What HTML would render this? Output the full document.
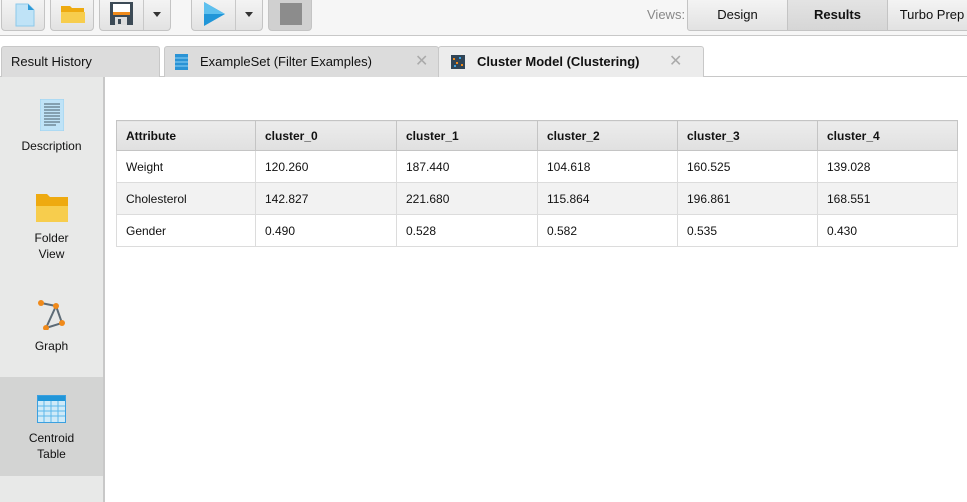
<!DOCTYPE html>
<html><head><style>
*{margin:0;padding:0;box-sizing:border-box}
body{width:967px;height:502px;overflow:hidden;background:#fff;font-family:"Liberation Sans",Arial,sans-serif;font-size:12px;color:#111;position:relative}
.a{position:absolute}
.btn{position:absolute;top:-2px;height:33px;border:1px solid #c4c4c4;border-radius:0 0 4px 4px;background:linear-gradient(#f4f4f4,#e2e2e2)}
.tab{position:absolute;top:46px;height:31px;border:1px solid #c8c8c8;border-bottom:none;border-radius:3px 3px 0 0;background:#dcdcdc;font-size:13px;line-height:30px}
table{position:absolute;left:116px;top:120px;border-collapse:collapse;font-size:12px;table-layout:fixed;width:841px}
td,th{border:1px solid #dcdcdc;height:32px;padding:0 9px;text-align:left}
th{background:linear-gradient(#ececec,#e0e0e0);border-color:#c4c4c4;height:30px;font-weight:bold}
tr:nth-child(3) td{background:#f2f2f2}
.side{position:absolute;left:0;top:77px;width:105px;height:425px;background:#e8e9e8;border-right:2px solid #c8c8c8}
.si{position:absolute;left:0;width:103px;text-align:center;font-size:12px;line-height:16px}
</style></head><body>
<div class="a" style="left:0;top:0;width:967px;height:36px;background:#f6f6f6;border-bottom:1px solid #c8c8c8"></div>
<div class="btn" style="left:1px;width:44px"><svg class="a" style="left:13px;top:4px" width="20" height="24"><path d="M1 1h12l6 6v16H1z" fill="#bfe3f7" stroke="#8cc8ea"/><path d="M13 1v6h6" fill="#2e9ad8"/></svg></div>
<div class="btn" style="left:50px;width:44px"><svg class="a" style="left:10px;top:5px" width="24" height="20"><path d="M0 2h9l2 2h12v14H0z" fill="#eeaa10"/><path d="M0 8h24v11H0z" fill="#f7cd4d"/></svg></div>
<div class="btn" style="left:99px;width:72px"><svg class="a" style="left:10px;top:3px" width="23" height="23"><rect x="0" y="0" width="23" height="23" fill="#3c4a56"/><rect x="3" y="10" width="17" height="3" fill="#f08a1a"/><rect x="3" y="2" width="17" height="8" fill="#fff"/><rect x="5" y="15" width="12" height="8" fill="#ddd"/><rect x="8" y="17" width="3" height="5" fill="#3c4a56"/></svg><div class="a" style="left:43px;top:0;width:1px;height:31px;background:#c8c8c8"></div><div class="a" style="left:53px;top:13px;border:4px solid transparent;border-top:5px solid #333"></div></div>
<div class="btn" style="left:191px;width:72px"><svg class="a" style="left:12px;top:3px" width="22" height="24"><path d="M0 0l21 12L0 24z" fill="#2196d8"/><path d="M0 0l21 12H0z" fill="#5ec0ee"/></svg><div class="a" style="left:43px;top:0;width:1px;height:31px;background:#c8c8c8"></div><div class="a" style="left:53px;top:13px;border:4px solid transparent;border-top:5px solid #333"></div></div>
<div class="btn" style="left:268px;width:44px;background:#d0d0d0"><div class="a" style="left:11px;top:4px;width:22px;height:22px;background:#8c8c8c"></div></div>
<div class="a" style="left:647px;top:7px;color:#888;font-size:13px">Views:</div>
<div class="btn" style="left:687px;width:101px;text-align:center;line-height:31px;font-size:13px;border-radius:0 0 0 3px">Design</div>
<div class="btn" style="left:787px;width:101px;text-align:center;line-height:31px;font-size:13px;font-weight:bold;background:linear-gradient(#e4e4e4,#d6d6d6);border-radius:0">Results</div>
<div class="btn" style="left:887px;width:90px;text-align:center;line-height:31px;font-size:13px;border-radius:0">Turbo Prep</div>
<div class="a" style="left:0;top:76px;width:967px;height:1px;background:#c8c8c8"></div>
<div class="tab" style="left:1px;width:159px;padding-left:9px">Result History</div>
<div class="tab" style="left:164px;width:275px;padding-left:35px"><svg class="a" style="left:10px;top:7px" width="13" height="16"><rect width="13" height="16" fill="#2a93d5"/><path d="M0 4h13M0 8h13M0 12h13" stroke="#8fd0f5"/></svg>ExampleSet (Filter Examples)<span class="a" style="left:250px;color:#aaa;font-size:16px">✕</span></div>
<div class="tab" style="left:438px;width:266px;padding-left:38px;background:#ececec;font-weight:bold;height:31px">
<svg class="a" style="left:12px;top:8px" width="14" height="14"><rect width="14" height="14" fill="#2f4456"/><rect x="2" y="3" width="2" height="2" fill="#f08a1a"/><rect x="8" y="2" width="2" height="2" fill="#3aa0e0"/><rect x="5" y="7" width="2" height="2" fill="#f08a1a"/><rect x="10" y="9" width="2" height="2" fill="#f08a1a"/><rect x="3" y="10" width="2" height="2" fill="#3aa0e0"/></svg>Cluster Model (Clustering)<span class="a" style="left:230px;color:#aaa;font-size:16px;font-weight:normal">✕</span></div>
<div class="side">
<div class="a" style="left:0;top:300px;width:103px;height:99px;background:#d3d4d3"></div>
<svg class="a" style="left:40px;top:22px" width="24" height="32"><rect x="0" y="0" width="24" height="32" fill="#bfe3f7" stroke="#9bd0ef"/><path d="M4 5h16M4 8h16M4 11h16M4 14h16M4 17h16M4 20h16M4 23h16M4 26h12" stroke="#4a5c6a"/></svg>
<div class="si" style="top:61px">Description</div>
<svg class="a" style="left:36px;top:117px" width="32" height="28"><path d="M0 0h11l3 3h18v25H0z" fill="#eeaa10"/><path d="M0 12h32v16H0z" fill="#f7cd4d"/></svg>
<div class="si" style="top:153px">Folder<br>View</div>
<svg class="a" style="left:36px;top:221px" width="32" height="32"><path d="M5 5L20 8L10 30L26 25L20 8" fill="none" stroke="#5d6b76" stroke-width="2"/><circle cx="5" cy="5" r="3" fill="#f08a1a"/><circle cx="20" cy="8" r="3" fill="#f08a1a"/><circle cx="26" cy="25" r="3" fill="#f08a1a"/><circle cx="10" cy="30" r="3" fill="#f08a1a"/></svg>
<div class="si" style="top:261px">Graph</div>
<svg class="a" style="left:37px;top:318px" width="29" height="28"><rect width="29" height="28" fill="#cfeaf8"/><rect width="29" height="6" fill="#2196d8"/><path d="M0 11h29M0 16h29M0 21h29M7 6v22M14 6v22M21 6v22" stroke="#5cb8ea"/><rect x="0.5" y="0.5" width="28" height="27" fill="none" stroke="#3aa0e0"/></svg>
<div class="si" style="top:353px">Centroid<br>Table</div>
</div>
<table>
<colgroup><col style="width:139px"><col style="width:141px"><col style="width:141px"><col style="width:140px"><col style="width:140px"><col style="width:140px"></colgroup>
<tr><th>Attribute</th><th>cluster_0</th><th>cluster_1</th><th>cluster_2</th><th>cluster_3</th><th>cluster_4</th></tr>
<tr><td>Weight</td><td>120.260</td><td>187.440</td><td>104.618</td><td>160.525</td><td>139.028</td></tr>
<tr><td>Cholesterol</td><td>142.827</td><td>221.680</td><td>115.864</td><td>196.861</td><td>168.551</td></tr>
<tr><td style="height:31px">Gender</td><td>0.490</td><td>0.528</td><td>0.582</td><td>0.535</td><td>0.430</td></tr>
</table>
</body></html>
